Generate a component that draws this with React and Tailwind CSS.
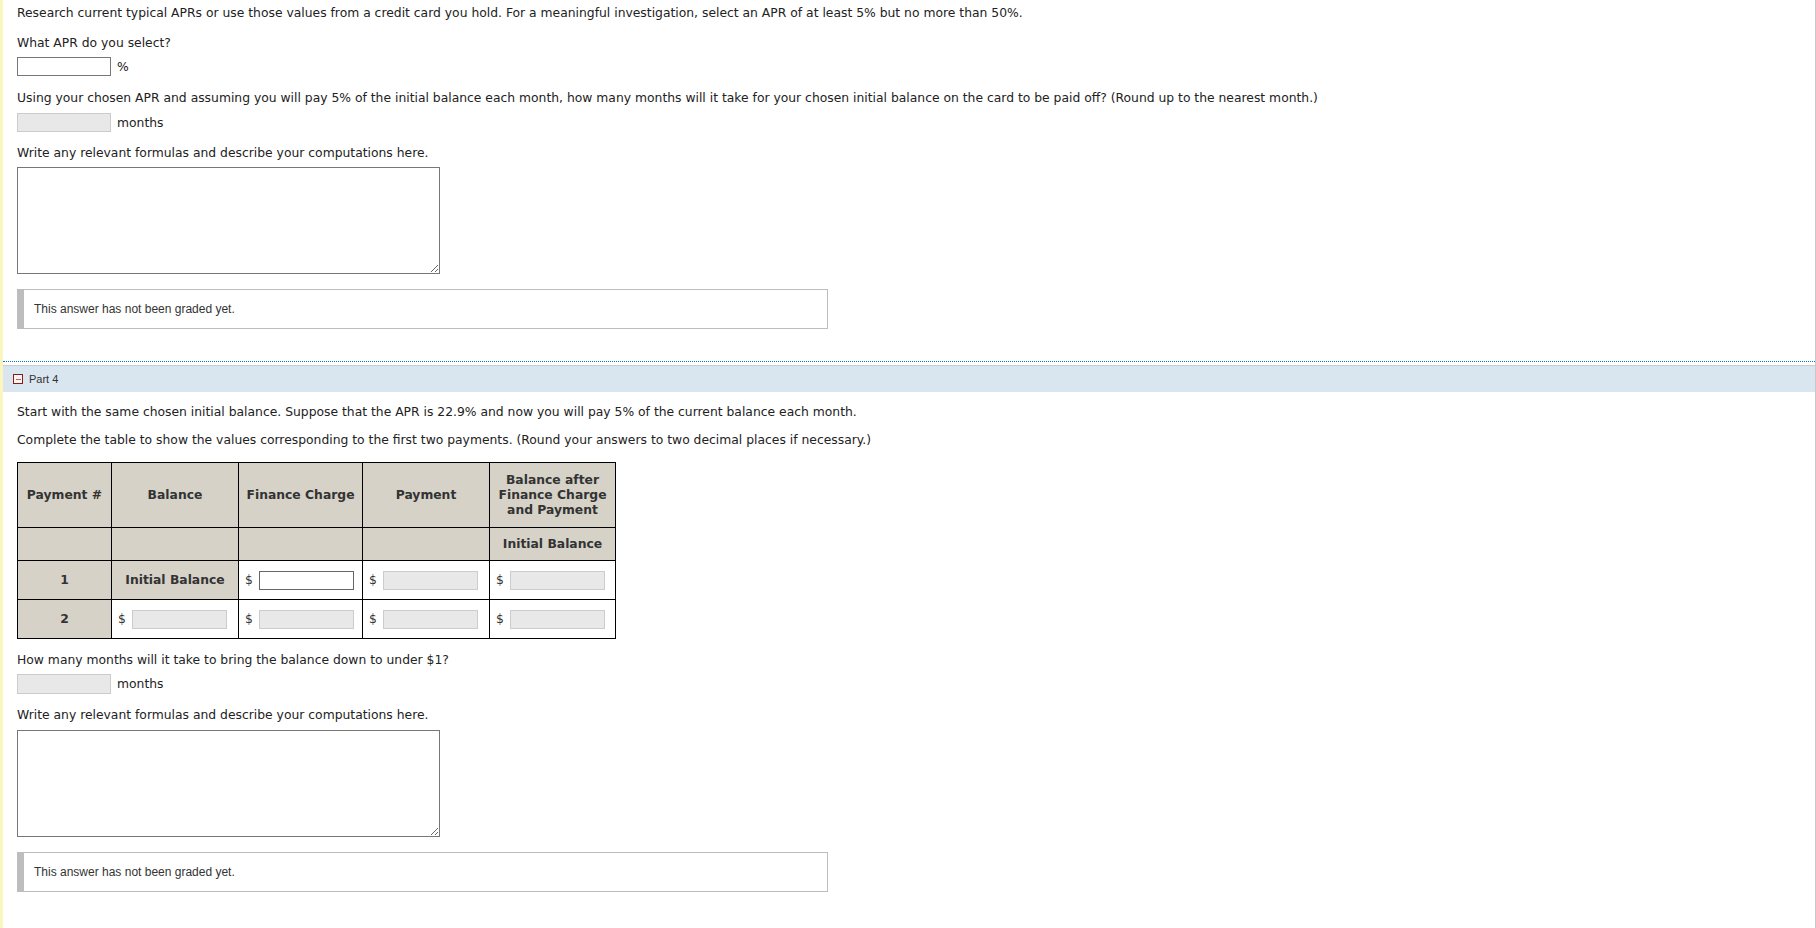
import React from 'react';

function GradedNote() {
  return (
    <div className="flex items-center w-[811px] h-[40px] border border-[#bdbdbd] border-l-[7px] border-l-[#bdbdbd] pl-[10px] font-['Liberation_Sans',sans-serif] text-[12px] text-[#333]">
      This answer has not been graded yet.
    </div>
  );
}

function WorkBox() {
  return (
    <textarea className="block w-[423px] h-[107px] border border-[#777] bg-white" />
  );
}

function MoneyCell({ active }) {
  return (
    <td className="border border-black bg-white pl-[6px] pr-[8px]">
      <div className="flex items-center gap-[6px]">
        <span className="text-[#333]">$</span>
        <input
          className={`w-[95px] h-[19px] border ${
            active ? 'bg-white border-[#666]' : 'bg-[#e8e8e8] border-[#ccc]'
          }`}
        />
      </div>
    </td>
  );
}

export default function App() {
  const th = 'border border-black bg-[#d6d2c8] font-bold text-[#333] text-center';

  return (
    <div className="w-[1816px] min-h-[928px] border-l-[3px] border-l-[#fbf6bd] border-r border-r-[#c8c8c8] bg-white font-['DejaVu_Sans',sans-serif] text-[12.35px] leading-4 text-[#222]">
      {/* Part 3 (tail) */}
      <div className="pl-[14px] pt-[5px]">
        <p>
          Research current typical APRs or use those values from a credit card you hold. For a
          meaningful investigation, select an APR of at least 5% but no more than 50%.
        </p>
        <p className="mt-[14px]">What APR do you select?</p>
        <div className="mt-[6px] flex items-center gap-[6px]">
          <input className="w-[94px] h-[19px] border border-[#777] bg-white" />
          <span>%</span>
        </div>
        <p className="mt-[14px]">
          Using your chosen APR and assuming you will pay 5% of the initial balance each month, how
          many months will it take for your chosen initial balance on the card to be paid off? (Round
          up to the nearest month.)
        </p>
        <div className="mt-[7px] flex items-center gap-[6px]">
          <input className="w-[94px] h-[19px] border border-[#ccc] bg-[#e8e8e8]" />
          <span>months</span>
        </div>
        <p className="mt-[13px]">Write any relevant formulas and describe your computations here.</p>
        <div className="mt-[6px]">
          <WorkBox />
        </div>
        <div className="mt-[15px]">
          <GradedNote />
        </div>
      </div>

      {/* Part 4 header */}
      <div className="mt-[32px] border-b border-dotted border-b-[#0b78d0]" />
      <div className="mt-[3px] h-[27px] border-t border-t-[#c4ccd4] bg-[#dae6ef] flex items-center pl-[10px] gap-[6px] font-['Liberation_Sans',sans-serif] text-[11px] text-[#333]">
        <span className="flex items-center justify-center w-[10px] h-[10px] border border-[#8b1a1a] bg-[#fdf4f4]">
          <span className="block w-[5px] h-[1px] bg-[#c95a5a]" />
        </span>
        <span>Part 4</span>
      </div>

      {/* Part 4 body */}
      <div className="pl-[14px] pt-[12px] pb-[40px]">
        <p>
          Start with the same chosen initial balance. Suppose that the APR is 22.9% and now you will
          pay 5% of the current balance each month.
        </p>
        <p className="mt-[12px]">
          Complete the table to show the values corresponding to the first two payments. (Round your
          answers to two decimal places if necessary.)
        </p>

        <table className="mt-[14px] border-collapse table-fixed w-[599px]">
          <colgroup>
            <col className="w-[94px]" />
            <col className="w-[127px]" />
            <col className="w-[124px]" />
            <col className="w-[127px]" />
            <col className="w-[126px]" />
          </colgroup>
          <tbody>
            <tr className="h-[65px]">
              <td className={th}>Payment #</td>
              <td className={th}>Balance</td>
              <td className={th}>Finance Charge</td>
              <td className={th}>Payment</td>
              <td className={`${th} leading-[15px]`}>
                Balance after
                <br />
                Finance Charge
                <br />
                and Payment
              </td>
            </tr>
            <tr className="h-[33px]">
              <td className={th}></td>
              <td className={th}></td>
              <td className={th}></td>
              <td className={th}></td>
              <td className={th}>Initial Balance</td>
            </tr>
            <tr className="h-[39px]">
              <td className={th}>1</td>
              <td className={th}>Initial Balance</td>
              <MoneyCell active />
              <MoneyCell />
              <MoneyCell />
            </tr>
            <tr className="h-[39px]">
              <td className={th}>2</td>
              <MoneyCell />
              <MoneyCell />
              <MoneyCell />
              <MoneyCell />
            </tr>
          </tbody>
        </table>

        <p className="mt-[13px]">How many months will it take to bring the balance down to under $1?</p>
        <div className="mt-[6px] flex items-center gap-[6px]">
          <input className="w-[94px] h-[20px] border border-[#ccc] bg-[#e8e8e8]" />
          <span>months</span>
        </div>
        <p className="mt-[13px]">Write any relevant formulas and describe your computations here.</p>
        <div className="mt-[7px]">
          <WorkBox />
        </div>
        <div className="mt-[15px]">
          <GradedNote />
        </div>
      </div>
    </div>
  );
}
